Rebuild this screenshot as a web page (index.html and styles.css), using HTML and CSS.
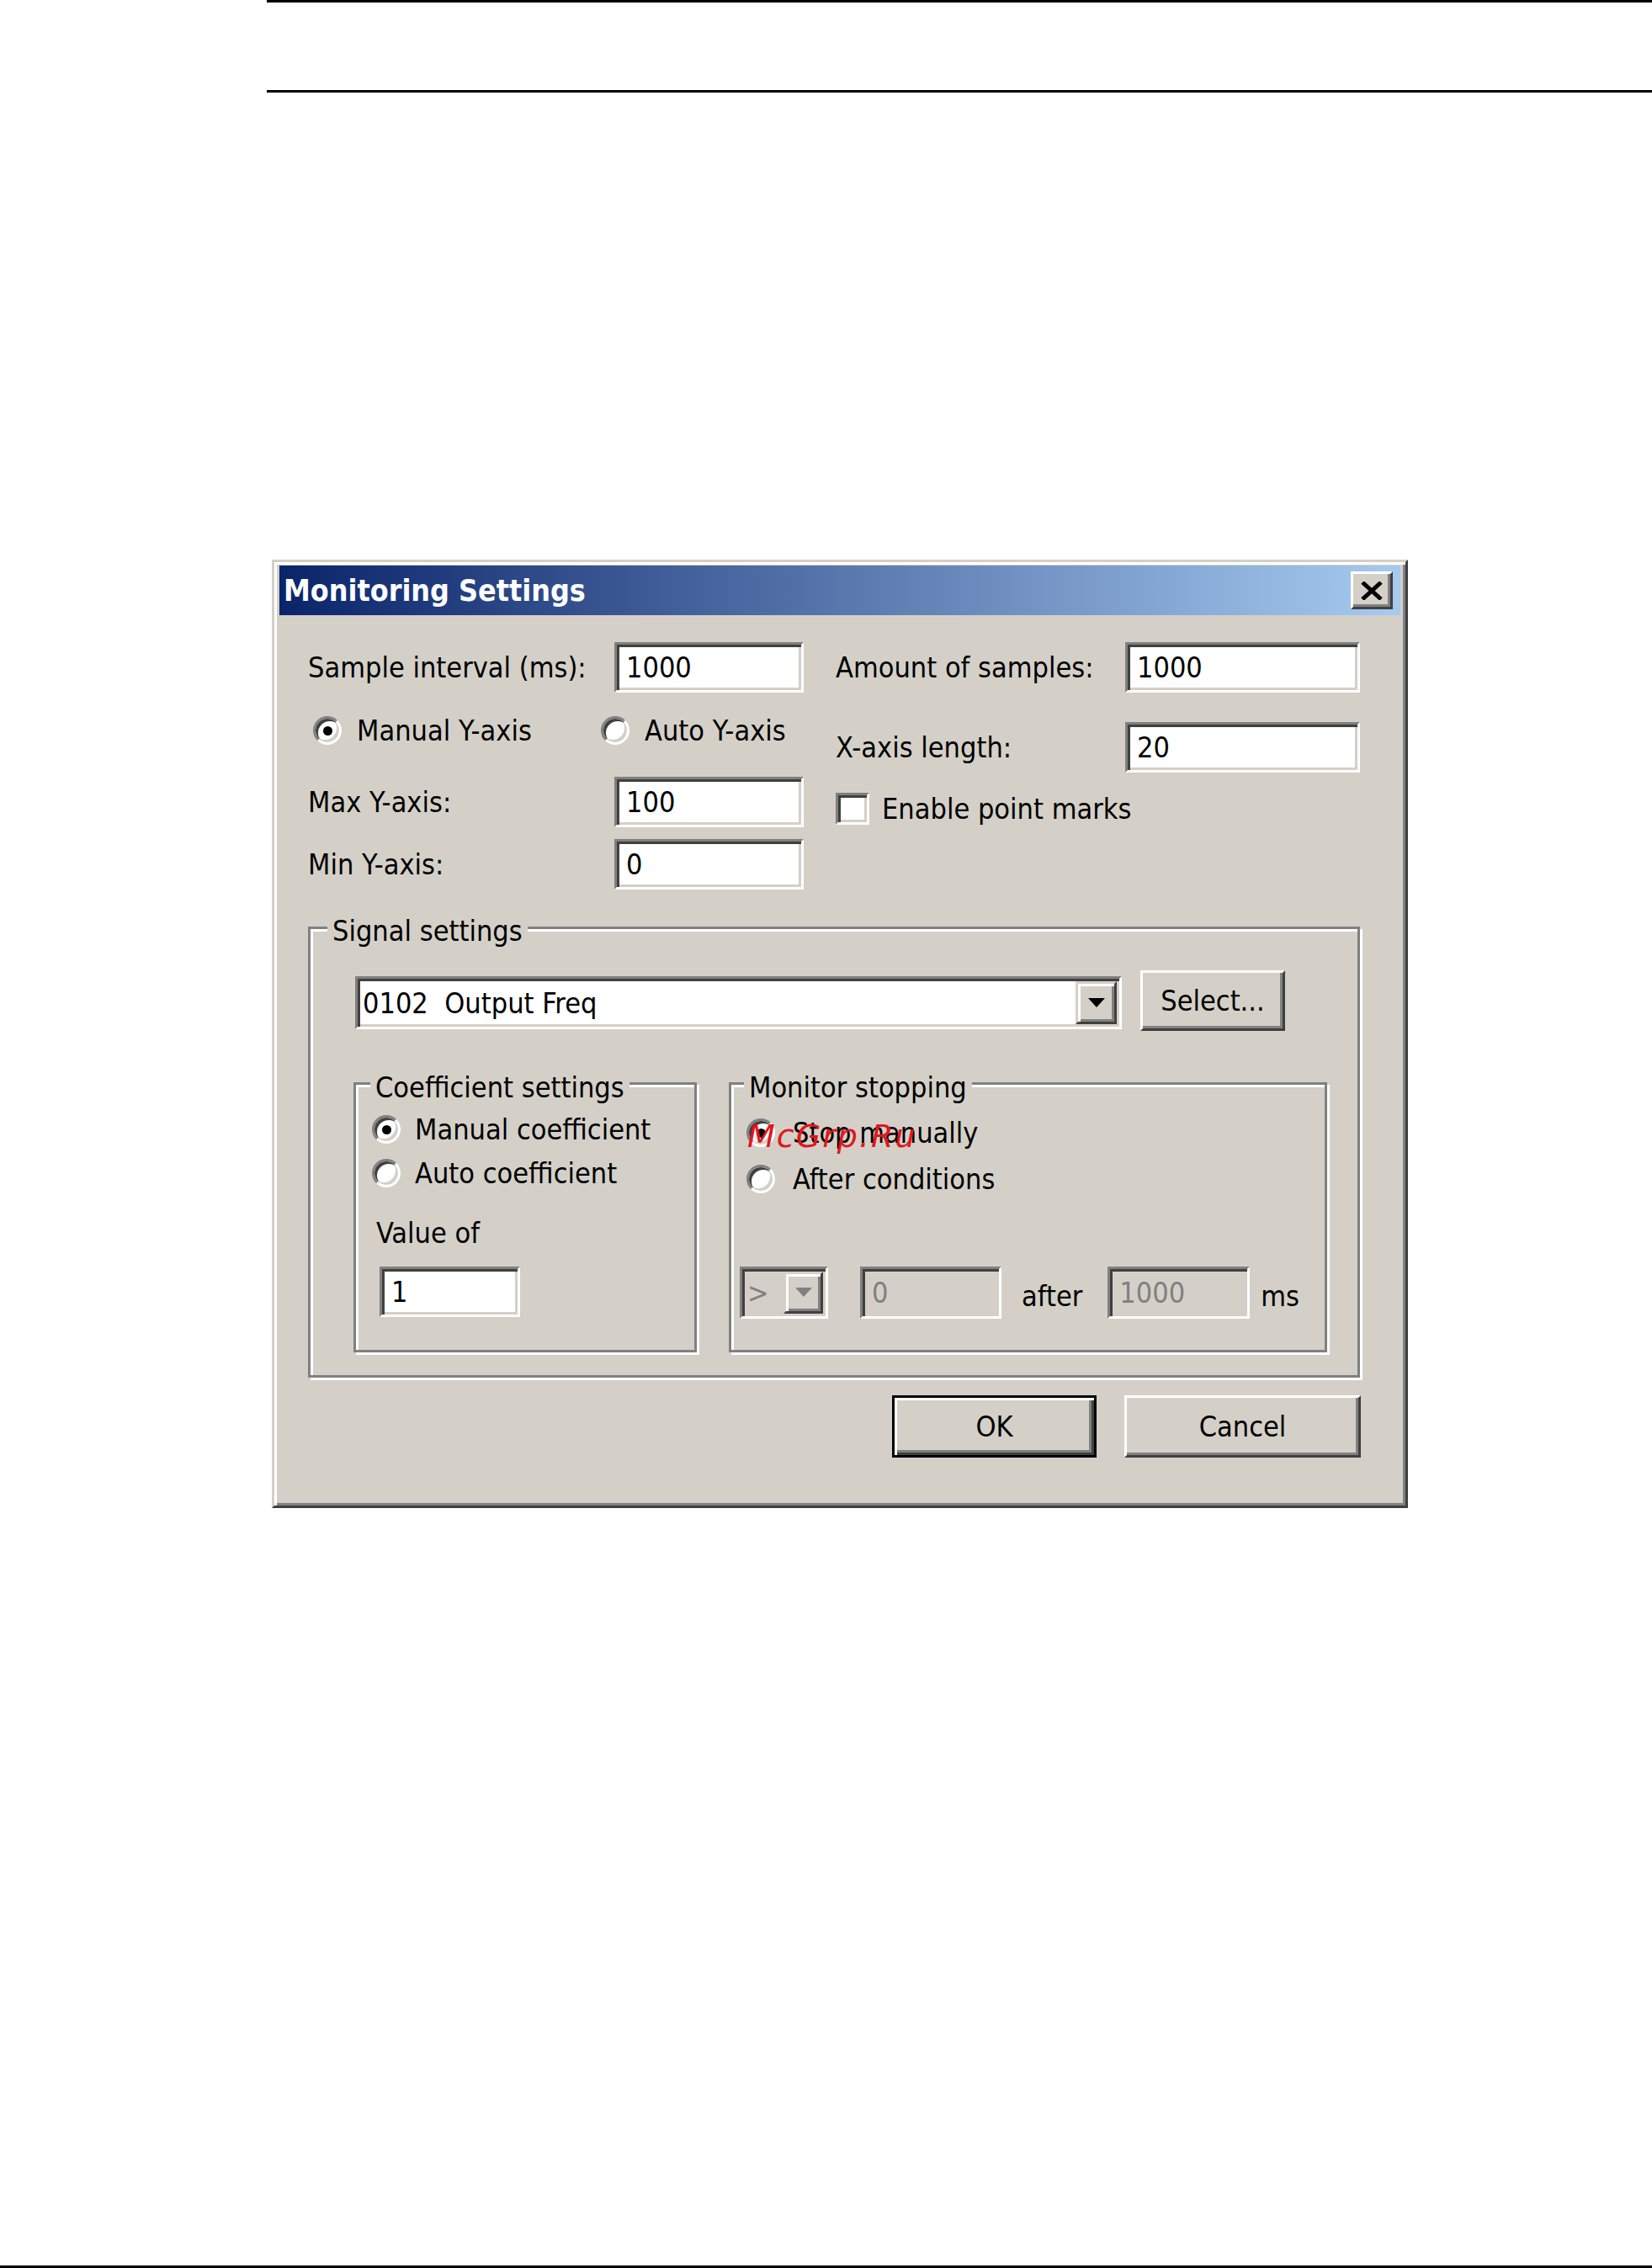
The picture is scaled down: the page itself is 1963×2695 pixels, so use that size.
FILE: index.html
```html
<!DOCTYPE html>
<html lang="en">
<head>
<meta charset="utf-8">
<title>Monitoring Settings</title>
<link rel="stylesheet" href="styles.css">
</head>
<body>
<div class="page">
  <div class="page-header"></div>

  <div class="dialog">
    <div class="titlebar">
      <span class="title">Monitoring Settings</span>
      <div class="close-btn">
        <svg width="26" height="22" viewBox="0 0 26 22"><path d="M2 1 L24 21 M24 1 L2 21" stroke="#000" stroke-width="5" fill="none"/></svg>
      </div>
    </div>

    <div class="dialog-body">
      <div class="top-fields">
        <div class="col-left">
          <div class="field-row">
            <span class="label">Sample interval (ms):</span>
            <span class="input">1000</span>
          </div>
          <div class="radio-row">
            <span class="option opt-manual"><span class="radio checked"></span><span>Manual Y-axis</span></span>
            <span class="option"><span class="radio"></span><span>Auto Y-axis</span></span>
          </div>
          <div class="field-row max-row">
            <span class="label">Max Y-axis:</span>
            <span class="input">100</span>
          </div>
          <div class="field-row min-row">
            <span class="label">Min Y-axis:</span>
            <span class="input">0</span>
          </div>
        </div>

        <div class="col-right">
          <div class="field-row">
            <span class="label">Amount of samples:</span>
            <span class="input">1000</span>
          </div>
          <div class="field-row xlen-row">
            <span class="label">X-axis length:</span>
            <span class="input">20</span>
          </div>
          <div class="check-row">
            <span class="checkbox"></span>
            <span>Enable point marks</span>
          </div>
        </div>
      </div>

      <div class="group signal">
        <span class="caption">Signal settings</span>
        <div class="signal-row">
          <div class="combo">
            <span class="combo-text">0102  Output Freq</span>
            <span class="combo-btn">
              <svg width="20" height="12" viewBox="0 0 20 12"><polygon points="0,0 20,0 10,11" fill="#000"/></svg>
            </span>
          </div>
          <div class="btn btn-select">Select...</div>
        </div>

        <div class="subgroups">
          <div class="group coef">
            <span class="caption">Coefficient settings</span>
            <div class="option-row"><span class="radio checked"></span><span>Manual coefficient</span></div>
            <div class="option-row second"><span class="radio"></span><span>Auto coefficient</span></div>
            <div class="value-label">Value of</div>
            <span class="input value-input">1</span>
          </div>

          <div class="group stop">
            <span class="caption">Monitor stopping</span>
            <div class="option-row"><span class="radio checked"></span><span>Stop manually</span></div>
            <div class="option-row second"><span class="radio"></span><span>After conditions</span></div>
            <div class="cond-row">
              <div class="combo disabled small-combo">
                <span class="combo-text">&gt;</span>
                <span class="combo-btn">
                  <svg width="20" height="12" viewBox="0 0 20 12"><polygon points="0,0 20,0 10,11" fill="#808080"/></svg>
                </span>
              </div>
              <span class="input disabled cond-value">0</span>
              <span class="cond-text after">after</span>
              <span class="input disabled cond-time">1000</span>
              <span class="cond-text ms">ms</span>
            </div>
          </div>
        </div>
      </div>

      <div class="buttons">
        <div class="btn btn-default">OK</div>
        <div class="btn btn-cancel">Cancel</div>
      </div>
    </div>

    <span class="watermark">McGrp.Ru</span>
  </div>

  <div class="page-footer"></div>
</div>
</body>
</html>
```

FILE: styles.css
```css
* {
  box-sizing: border-box;
}

html,
body {
  margin: 0;
  padding: 0;
  background: #fff;
}

body {
  font-family: "DejaVu Sans Condensed", "DejaVu Sans", sans-serif;
  font-size: 34px;
  color: #000;
}

.page {
  width: 1963px;
  height: 2695px;
  display: flex;
  flex-direction: column;
}

/* running header rules of the document page */
.page-header {
  flex: none;
  margin-left: 317px;
  height: 110px;
  border-top: 3px solid #000;
  border-bottom: 3px solid #000;
}

.page-footer {
  flex: none;
  margin-top: auto;
  height: 3px;
  background: #000;
}

/* classic window frame */
.dialog {
  position: relative;
  flex: none;
  margin: 555px 0 0 323px;
  width: 1350px;
  height: 1127px;
  background: #d4d0c8;
  border: 3px solid;
  border-color: #d4d0c8 #404040 #404040 #d4d0c8;
  box-shadow: inset 3px 3px 0 #fff, inset -3px -3px 0 #808080;
  padding: 4px 6px 6px;
  display: flex;
  flex-direction: column;
}

.titlebar {
  flex: none;
  height: 59px;
  display: flex;
  align-items: center;
  padding-left: 5px;
  background: linear-gradient(to right, #0a246a, #a6caf0);
}

.title {
  color: #fff;
  font-weight: bold;
  font-size: 35.5px;
}

.close-btn {
  margin-left: auto;
  margin-right: 9px;
  width: 50px;
  height: 45px;
  display: flex;
  align-items: center;
  justify-content: center;
  background: #d4d0c8;
  border: 3px solid;
  border-color: #fff #404040 #404040 #fff;
  box-shadow: inset -3px -3px 0 #808080;
}

.dialog-body {
  display: flex;
  flex-direction: column;
  padding-left: 34px;
}

/* top block: two columns of fields */
.top-fields {
  display: flex;
  gap: 38px;
  padding-top: 32px;
}

.col-left {
  width: 589px;
  display: flex;
  flex-direction: column;
}

.col-right {
  width: 623px;
  display: flex;
  flex-direction: column;
}

.field-row {
  display: flex;
  align-items: center;
  height: 60px;
}

.col-left .label {
  width: 364px;
}

.col-right .label {
  width: 344px;
}

.col-left .input {
  width: 225px;
}

.col-right .input {
  width: 279px;
}

.max-row {
  margin-top: 35px;
}

.min-row {
  margin-top: 14px;
}

.xlen-row {
  margin-top: 35px;
}

/* sunken edit field */
.input {
  display: flex;
  align-items: center;
  height: 60px;
  padding-left: 11px;
  background: #fff;
  border: 3px solid;
  border-color: #808080 #fff #fff #808080;
  box-shadow: inset 3px 3px 0 #404040, inset -3px -3px 0 #d4d0c8;
  white-space: nowrap;
}

.input.disabled {
  background: #d4d0c8;
  color: #808080;
}

.radio-row {
  display: flex;
  align-items: center;
  height: 40px;
  margin-top: 25px;
  padding-left: 6px;
}

.option {
  display: flex;
  align-items: center;
  gap: 18px;
}

.opt-manual {
  width: 342px;
}

.radio {
  flex: none;
  width: 34px;
  height: 34px;
  border-radius: 50%;
  background: #fff;
  border: 3px solid;
  border-color: #808080 #fff #fff #808080;
  box-shadow: inset 3px 3px 0 #404040, inset -3px -3px 0 #d4d0c8;
  display: flex;
  align-items: center;
  justify-content: center;
}

.radio.checked::after {
  content: "";
  width: 11px;
  height: 11px;
  border-radius: 50%;
  background: #000;
}

.check-row {
  display: flex;
  align-items: center;
  gap: 15px;
  height: 40px;
  margin-top: 23px;
}

.checkbox {
  width: 40px;
  height: 38px;
  background: #fff;
  border: 3px solid;
  border-color: #808080 #fff #fff #808080;
  box-shadow: inset 3px 3px 0 #404040, inset -3px -3px 0 #d4d0c8;
}

/* etched group frames */
.group {
  position: relative;
  border: 3px solid #808080;
  box-shadow: inset 3px 3px 0 #fff, 3px 3px 0 #fff;
}

.caption {
  position: absolute;
  line-height: 40px;
  padding: 0 6px;
  background: #d4d0c8;
  white-space: nowrap;
}

.signal {
  margin-top: 44px;
  width: 1250px;
  padding: 49px 0 27px 53px;
}

.signal > .caption {
  left: 20px;
  top: -18px;
}

.signal-row {
  display: flex;
  align-items: flex-start;
}

.combo {
  display: flex;
  padding: 3px;
  background: #fff;
  border: 3px solid;
  border-color: #808080 #fff #fff #808080;
  box-shadow: inset 3px 3px 0 #404040, inset -3px -3px 0 #d4d0c8;
}

.signal-row .combo {
  margin-top: 7px;
  width: 911px;
  height: 63px;
}

.combo-text {
  flex: 1;
  display: flex;
  align-items: center;
  padding-left: 3px;
  white-space: pre;
}

.combo-btn {
  flex: none;
  width: 49px;
  display: flex;
  align-items: center;
  justify-content: center;
  background: #d4d0c8;
  border: 3px solid;
  border-color: #d4d0c8 #404040 #404040 #d4d0c8;
  box-shadow: inset 3px 3px 0 #fff, inset -3px -3px 0 #808080;
}

.combo.disabled {
  background: #d4d0c8;
  color: #808080;
}

/* raised push buttons */
.btn {
  display: flex;
  align-items: center;
  justify-content: center;
  background: #d4d0c8;
  border: 3px solid;
  border-color: #fff #404040 #404040 #fff;
  box-shadow: inset -3px -3px 0 #808080;
}

.btn-select {
  margin-left: 22px;
  width: 172px;
  height: 72px;
}

.subgroups {
  display: flex;
  gap: 38px;
  margin-top: 61px;
  margin-left: -2px;
}

.coef {
  width: 408px;
  height: 321px;
  padding: 33px 0 0 19px;
}

.coef > .caption {
  left: 17px;
  top: -17px;
}

.stop {
  width: 711px;
  height: 321px;
  padding: 37px 0 0 18px;
}

.stop > .caption {
  left: 15px;
  top: -17px;
}

.option-row {
  display: flex;
  align-items: center;
  gap: 17px;
  height: 40px;
}

.coef .option-row.second {
  margin-top: 12px;
}

.stop .option-row {
  gap: 21px;
}

.stop .option-row.second {
  margin-top: 15px;
}

.value-label {
  height: 40px;
  line-height: 40px;
  margin-top: 31px;
  margin-left: 5px;
}

.value-input {
  width: 167px;
  margin-top: 20px;
  margin-left: 9px;
}

.cond-row {
  display: flex;
  align-items: center;
  height: 62px;
  margin-top: 84px;
  margin-left: -8px;
}

.small-combo {
  width: 105px;
  height: 62px;
}

.small-combo .combo-btn {
  width: 47px;
}

.cond-value {
  width: 168px;
  height: 62px;
  margin-left: 38px;
}

.cond-text {
  padding-top: 8px;
}

.after {
  margin-left: 24px;
}

.cond-time {
  width: 169px;
  height: 62px;
  margin-left: 30px;
}

.ms {
  margin-left: 13px;
}

.buttons {
  display: flex;
  justify-content: flex-end;
  gap: 33px;
  margin-top: 21px;
  padding-right: 47px;
}

.btn-default {
  width: 243px;
  height: 74px;
  border: 3px solid #000;
  box-shadow: inset 3px 3px 0 #fff, inset -3px -3px 0 #404040, inset -6px -6px 0 #808080;
}

.btn-cancel {
  width: 281px;
  height: 74px;
}

/* site stamp printed across the dialog */
.watermark {
  position: absolute;
  left: 562px;
  top: 662px;
  font-family: "DejaVu Sans", sans-serif;
  font-style: italic;
  font-size: 38px;
  line-height: 40px;
  letter-spacing: 2px;
  color: #e3161d;
}
```
